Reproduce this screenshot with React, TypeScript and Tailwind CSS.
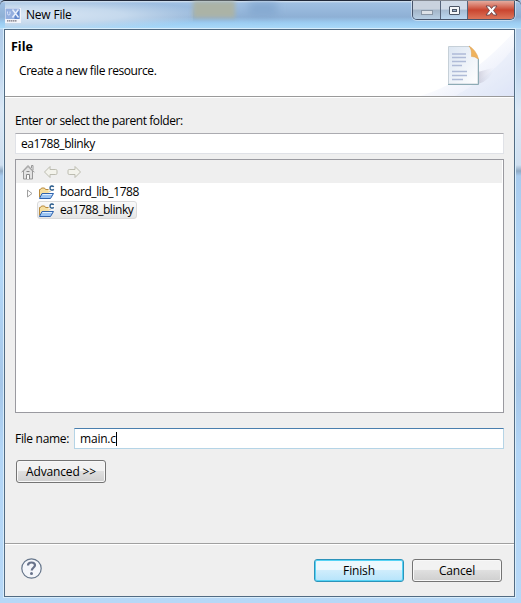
import type { ReactNode } from "react";

function ProjectFolderIcon() {
  return (
    <svg width="17" height="15" viewBox="0 0 17 15" className="shrink-0">
      <path d="M1.5 12.5V4.500H2.500L3.500 3h3l1 1.500H12V7" fill="#f6dfa0" stroke="#b98a3c" />
      <path d="M1.5 13.500L4 8.500h11.500l-3 5H1.500z" fill="#9cc5f3" stroke="#2f63ae" />
      <path d="M4.500 9.500h9.500" stroke="#e2f0ff" />
      <rect x="10.500" y="0" width="6.500" height="6.500" fill="#fff" opacity="0.8" />
      <path d="M15.700 2C14.700.4 12 .7 12 3s2.500 2.700 3.700 1.200" fill="none" stroke="#2b5c8c" strokeWidth="1.400" />
    </svg>
  );
}

function ArrowIcon({ flip = false }: { flip?: boolean }) {
  return (
    <svg width="16" height="14" viewBox="0 0 16 14" className={flip ? "-scale-x-100" : ""}>
      <path d="M1.500 7L7 1.500v3h5.700q1.300 0 1.300 1.200v2.600q0 1.200-1.300 1.200H7v3z" fill="#f3f3ec" stroke="#bcbcb0" strokeLinejoin="round" />
    </svg>
  );
}

function HomeIcon() {
  return (
    <svg width="14" height="16" viewBox="0 0 14 16">
      <path d="M2.500 7v8h9V7L7 2.500z" fill="#e2e2e2" stroke="#999" />
      <path d="M.6 8.300L7 1.500l6.400 6.800M10.500 4V1.500h1.500V6" fill="none" stroke="#999" />
      <path d="M5.500 15v-4.500h3V15M5.500 7.500h3" fill="#fafafa" stroke="#888" />
    </svg>
  );
}

function AppIcon() {
  return (
    <svg width="16" height="15" viewBox="0 0 16 15">
      <rect width="16" height="15" fill="#f2f4fa" />
      <rect x=".5" y=".5" width="14" height="10.500" fill="#94afdf" />
      <path d="M9.500 6l5-5v10h-5z" fill="#6288cc" />
      <path d="M2.500 3.500v2q0 1.500 1.300 1.500T5 5.500v-2" fill="none" stroke="#d5e3fa" />
      <path d="M7.500 1.500l6 8M13.500 1.500l-6 8" stroke="#e5edfb" strokeWidth="1.500" />
      <path d="M2 12.900h10" stroke="#77737c" strokeWidth="1.300" strokeDasharray="1.500 .5" />
    </svg>
  );
}

function HeaderArt() {
  return (
    <svg width="114" height="66" viewBox="0 0 114 66" className="shrink-0">
      <defs>
        <linearGradient id="wash" x1="0" y1="0" x2="1" y2="1">
          <stop offset=".4" stopColor="#fff" />
          <stop offset="1" stopColor="#dfe5f8" />
        </linearGradient>
        <linearGradient id="sheet" x1="0" y1="0" x2="1" y2="1">
          <stop stopColor="#dce6f2" />
          <stop offset="1" stopColor="#fff" />
        </linearGradient>
        <linearGradient id="shade" x1="0" y1="0" x2="1" y2="0">
          <stop stopColor="#b9b8c9" />
          <stop offset="1" stopColor="#e9ebf7" stopOpacity="0" />
        </linearGradient>
      </defs>
      <path d="M20 66C60 54 88 30 114 2v64z" fill="url(#wash)" />
      <path d="M55 66C80 52 100 36 114 17v49z" fill="#dce3f6" opacity=".3" />
      <path d="M78 54V42l18-5q-6 14-18 17z" fill="url(#shade)" opacity=".6" />
      <path d="M48.500 16.500h21l8.500 13v24.500H48.500z" fill="url(#sheet)" stroke="#c6d0d8" />
      <path d="M48 54.500h30.500V29" fill="none" stroke="#8dabb5" />
      <path d="M69 16q7 4 9.500 13-4-3-7-2.500Q72 19 69 16z" fill="#efb25c" stroke="#e0a558" strokeWidth=".6" />
      <path d="M52 24h14M52 27.500h14M52 31.500h14M52 35.500h10M52 41.500h15M52 45.500h15M52 49.500h11" stroke="#afbbd7" strokeWidth="1.400" />
    </svg>
  );
}

function WindowButtons() {
  return (
    <div className="flex h-[19px] w-[103px] overflow-hidden rounded-b-[5px] border border-t-0 border-[#46536a] shadow-[0_0_0_1px_rgba(255,255,255,0.45)]">
      <div className="flex w-[28px] justify-center border-r border-[#56647a] bg-linear-to-b from-[#c9d2de] from-45% via-[#a3b5c8] via-50% to-[#b8cfe4] pt-[9px]">
        <div className="h-[5px] w-[12px] border border-[#8996a5] bg-[#dde2e8]" />
      </div>
      <div className="flex w-[27px] justify-center border-r border-[#56647a] bg-linear-to-b from-[#d1dbe8] from-45% via-[#a6bbd2] via-50% to-[#bcd8f1] pt-[5px]">
        <div className="flex h-[9px] w-[11px] items-center justify-center rounded-[1px] border border-[#4c5666] bg-[#f4f6f8]">
          <div className="h-[3px] w-[5px] border border-[#4c5666] bg-[#9cb0c9]" />
        </div>
      </div>
      <div className="flex flex-1 items-center justify-center bg-linear-to-b from-[#e4aa9e] from-0% via-[#c9442f] via-50% to-[#dc755a]">
        <svg width="13" height="11" viewBox="0 0 13 11">
          <path d="M1 1h3.500l2 2.500 2-2.500H12L8.500 5.500 12 10H8.500l-2-2.500-2 2.500H1l3.500-4.500z" fill="#fff" stroke="#66434a" strokeWidth=".9" />
        </svg>
      </div>
    </div>
  );
}

function Button({ children, primary = false }: { children: ReactNode; primary?: boolean }) {
  const tone = primary
    ? "border-[#2c93ba] from-[#edf8fd] from-45% via-[#cfedfc] via-50% to-[#b5e4fb] shadow-[inset_0_0_0_1px_#55d3f5]"
    : "border-[#747474] from-[#f2f2f2] from-45% via-[#dfdfdf] via-50% to-[#cfcfcf] shadow-[inset_0_0_0_1px_#f8f8f8]";
  return (
    <button className={`flex h-[23px] w-[90px] items-center justify-center rounded-[3px] border bg-linear-to-b pt-px tracking-[-0.15px] ${tone}`}>
      {children}
    </button>
  );
}

export default function App() {
  return (
    <div className="flex h-[603px] w-[521px] flex-col overflow-hidden bg-[linear-gradient(to_bottom,#a9c4e4_0px,#b9d3ee_60px,#dce8f5_110px,#cfdff0_165px,#8ea9c4_171px,#a8cbee_176px,#b4d8f8_270px,#a5c6e8_385px,#b2d5f6_450px,#b7d8f7_603px)] font-['Open_Sans','Noto_Sans',sans-serif] text-[12px] leading-[16px] tracking-[-0.42px] text-black">
      <header className="flex h-[29px] shrink-0 items-start justify-between rounded-t-[5px] border-t border-[#202839] bg-[linear-gradient(to_bottom,#d8e4f0_0px,#9fbfe2_2px,#8eb0d5_16px,#9ccdf2_22px,#a8d8f8_27px,#d8effb_28px)] pl-[5px] pr-[6px]">
        <div className="flex h-[28px] w-[188px] items-center bg-[radial-gradient(ellipse_at_left,#dce8f5_0%,#c5d9ed_45%,transparent_80%)]">
          <AppIcon />
          <span className="ml-[5px] tracking-[-0.2px]">New File</span>
        </div>
        <div className="h-[17px] w-[42px] bg-[#abb3a6] blur-[2px]" />
        <div className="ml-[14px] mr-auto h-[14px] w-[28px] bg-[#799fc9] opacity-60 blur-[4px]" />
        <WindowButtons />
      </header>

      <main className="ml-[4px] mr-[6px] flex h-[568px] shrink-0 flex-col border border-[#526b83] bg-[#efefef] shadow-[0_0_0_1px_#d8edfb]">
        <section className="flex h-[67px] shrink-0 justify-between border-b border-[#9a9a9a] bg-white">
          <div className="pl-[6px] pt-[9px]">
            <h1 className="text-[12.5px] font-bold tracking-[0px]">File</h1>
            <p className="ml-[8px] mt-[8px]">Create a new file resource.</p>
          </div>
          <HeaderArt />
        </section>

        <section className="flex flex-1 flex-col border-t border-white pl-[10px] pr-[10px] pt-[15px]">
          <label>Enter or select the parent folder:</label>
          <div className="mt-[4px] flex h-[21px] items-center border border-[#e0e2e7] border-t-[#ababb0] bg-white pl-[5px]">ea1788_blinky</div>
          <div className="mt-[5px] flex h-[254px] flex-col border border-[#9a9aa0] bg-white">
            <div className="mr-[1px] flex h-[23px] items-center gap-[7px] bg-[#efefef] pl-[5px]">
              <HomeIcon />
              <div className="ml-px flex gap-[7px]">
                <ArrowIcon />
                <ArrowIcon flip />
              </div>
            </div>
            <div className="flex h-[18px] items-center pl-[11px]">
              <svg width="6" height="9" viewBox="0 0 6 9" className="mr-[5px] mt-[2px]">
                <path d="M.5 1v7l4.500-3.500z" fill="#fff" stroke="#a0a0a0" />
              </svg>
              <ProjectFolderIcon />
              <span className="ml-[5px]">board_lib_1788</span>
            </div>
            <div className="ml-[21px] flex h-[18px] w-[100px] items-center rounded-[3px] border border-[#dadada] bg-linear-to-b from-[#fafafa] to-[#e6e6e6]">
              <ProjectFolderIcon />
              <span className="ml-[5px] whitespace-nowrap tracking-[-0.45px]">ea1788_blinky</span>
            </div>
          </div>
          <div className="mt-[15px] flex items-center">
            <label className="w-[59px] whitespace-nowrap tracking-[-0.3px]">File name:</label>
            <div className="flex h-[21px] flex-1 items-center border border-[#b5d4e6] border-t-[#4a7fae] bg-white pl-[5px]">
              <span className="tracking-[-0.2px]">main.c</span>
              <span className="h-[14px] w-px bg-black" />
            </div>
          </div>
          <div className="ml-px mt-[11px]">
            <Button>Advanced &gt;&gt;</Button>
          </div>
        </section>

        <footer className="flex h-[53px] shrink-0 items-center border-t border-[#a0a0a0] pl-[16px] pr-[12px] shadow-[inset_0_1px_0_#fff]">
          <svg width="21" height="21" viewBox="0 0 21 21" className="mr-auto -mt-[3px]">
            <circle cx="10.500" cy="10.500" r="9.700" fill="#f4f6fa" stroke="#66768b" strokeWidth="1.200" />
            <path d="M7 7.500q0-3 3.500-3t3.500 2.800c0 2.200-3 2.200-3.300 5.200" fill="none" stroke="#68738b" strokeWidth="2.200" />
            <circle cx="10.500" cy="15.500" r="1.500" fill="#68738b" />
          </svg>
          <div className="flex gap-[8px]">
            <Button primary>Finish</Button>
            <Button>Cancel</Button>
          </div>
        </footer>
      </main>
    </div>
  );
}
